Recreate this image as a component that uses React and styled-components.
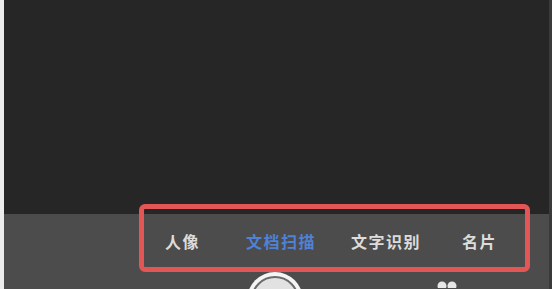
import React from "react";
import styled, { createGlobalStyle } from "styled-components";

const GlobalStyle = createGlobalStyle`
  html, body {
    margin: 0;
    padding: 0;
    width: 552px;
    height: 289px;
    overflow: hidden;
    background: #262626;
  }
  #root {
    width: 552px;
    height: 289px;
  }
`;

// space before each label, as in the shot
const modes = [
  { label: "人像", space: 0 },
  { label: "文档扫描", space: 46, active: true },
  { label: "文字识别", space: 35 },
  { label: "名片", space: 41 },
];

function App() {
  return (
    <>
      <GlobalStyle />
      <Screen>
        <Viewfinder />
        <Panel>
          <ModeRow>
            {modes.map((m) => (
              <ModeItem key={m.label} $active={m.active} $space={m.space}>
                {m.label}
              </ModeItem>
            ))}
          </ModeRow>
          <Controls>
            <Shutter>
              <ShutterInner />
            </Shutter>
            <FlipIcon>
              <svg width="22" height="10" viewBox="0 0 22 10">
                <circle cx="6" cy="8" r="4.5" fill="#e6e6e6" />
                <circle cx="16" cy="8" r="4.5" fill="#e6e6e6" />
              </svg>
            </FlipIcon>
          </Controls>
        </Panel>
        <Highlight />
      </Screen>
    </>
  );
}

export default App;

const Screen = styled.div`
  position: relative;
  width: 552px;
  height: 289px;
  box-sizing: border-box;
  display: flex;
  flex-direction: column;
  border-left: 4px solid #ececec;
  border-right: 3px solid #3a3a3a;
  box-shadow: inset 2px 0 0 #3c3c3c;
  font-family: "Noto Sans CJK SC", "Noto Sans", sans-serif;
`;

const Viewfinder = styled.div`
  height: 214px;
  background: #262626;
  flex-shrink: 0;
`;

const Panel = styled.div`
  flex: 1;
  background: #4c4c4c;
  display: flex;
  flex-direction: column;
  overflow: hidden;
`;

const ModeRow = styled.div`
  height: 54px;
  display: flex;
  align-items: center;
  padding-left: 161px;
  flex-shrink: 0;
`;

const ModeItem = styled.span`
  margin-left: ${(p) => p.$space}px;
  font-size: 16px;
  font-weight: 700;
  letter-spacing: 1.5px;
  line-height: 1;
  color: ${(p) => (p.$active ? "#4f82d6" : "#dcdcdc")};
`;

const Controls = styled.div`
  display: flex;
  align-items: flex-start;
  padding-left: 243px;
  padding-top: 4px;
`;

const Shutter = styled.div`
  width: 56px;
  height: 56px;
  border-radius: 50%;
  background: #f4f4f4;
  box-sizing: border-box;
  padding: 4px;
  flex-shrink: 0;
`;

const ShutterInner = styled.div`
  width: 100%;
  height: 100%;
  border-radius: 50%;
  border: 2px solid #6a6a6a;
  box-sizing: border-box;
  background: #e2e2e2;
`;

const FlipIcon = styled.div`
  margin-left: 133px;
  margin-top: 6px;
  display: flex;
`;

const Highlight = styled.div`
  position: absolute;
  left: 135px;
  top: 204px;
  width: 391px;
  height: 68px;
  box-sizing: border-box;
  border: 5px solid #e35656;
  border-radius: 6px;
  pointer-events: none;
`;
